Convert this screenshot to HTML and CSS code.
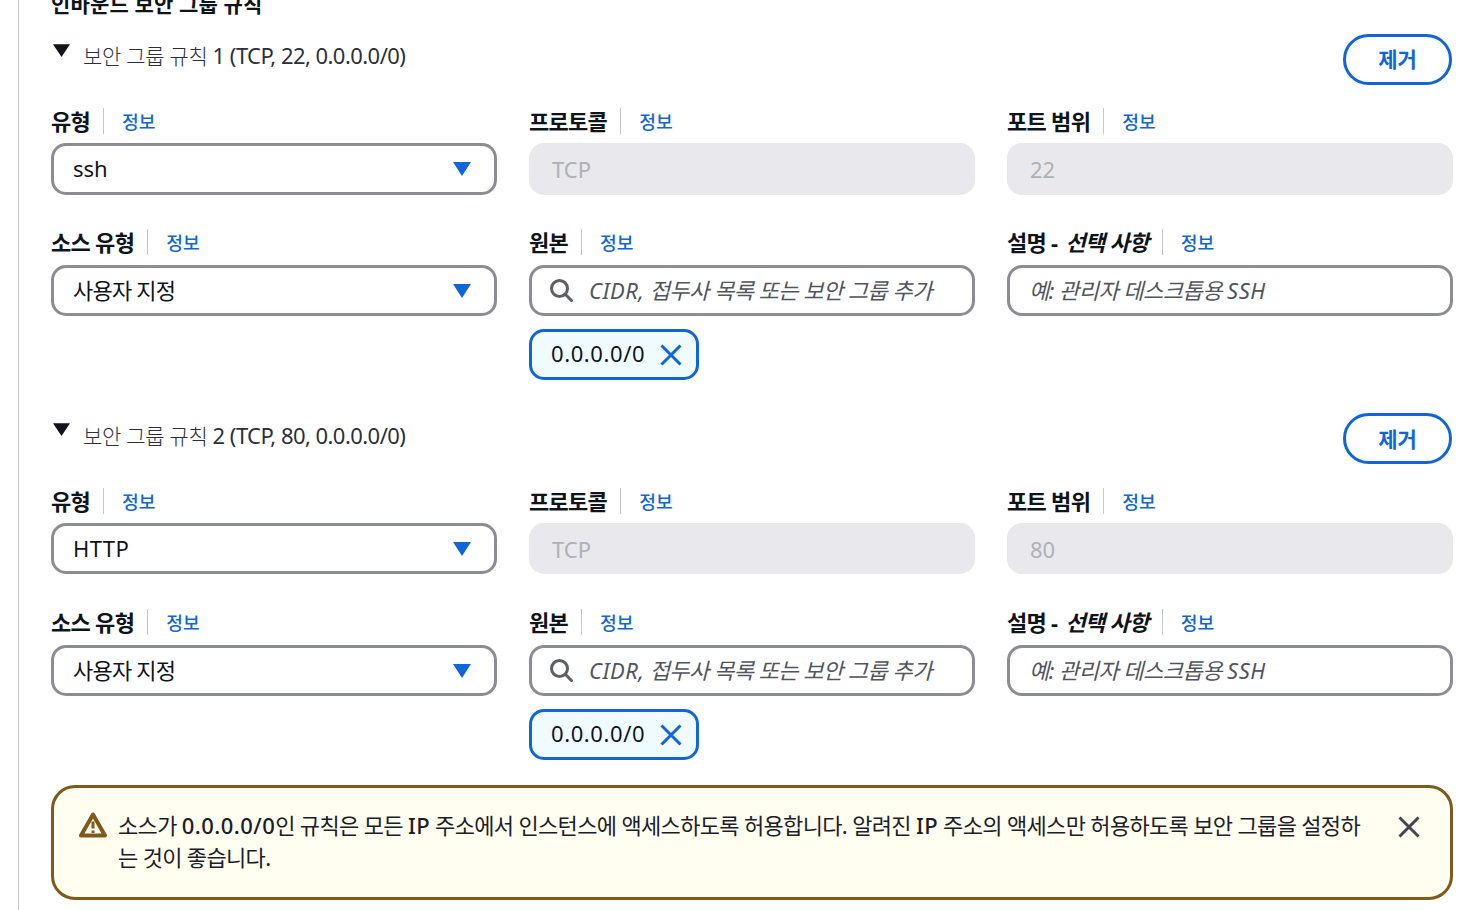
FILE: index.html
```html
<!DOCTYPE html>
<html lang="ko">
<head>
    <meta charset="UTF-8">
    <meta name="viewport" content="width=device-width, initial-scale=1.0">
    <title>인바운드 보안 그룹 규칙</title>
    <link rel="stylesheet" href="styles.css">
</head>
<body>
    <div class="page">
        <h2 class="section-title">인바운드 보안 그룹 규칙</h2>

        <div class="rule">
            <div class="rule-head">
                <div class="rule-title">
                    <svg class="caret" viewBox="0 0 16 12"><path d="M0 0h16L8 12z"/></svg>
                    <span class="rule-name"><span class="light">보안 그룹 규칙</span> 1 (TCP, 22, 0.0.0.0/0)</span>
                </div>
                <button class="remove-btn">제거</button>
            </div>
            <div class="field-grid">
                <div class="field">
                    <div class="field-label"><span class="label-text">유형</span><a class="info">정보</a></div>
                    <div class="select"><span>ssh</span><svg class="select-caret" viewBox="0 0 18 14"><path d="M0 0h18L9 14z"/></svg></div>
                </div>
                <div class="field">
                    <div class="field-label"><span class="label-text">프로토콜</span><a class="info">정보</a></div>
                    <div class="input-disabled">TCP</div>
                </div>
                <div class="field">
                    <div class="field-label"><span class="label-text">포트 범위</span><a class="info">정보</a></div>
                    <div class="input-disabled">22</div>
                </div>
                <div class="field">
                    <div class="field-label"><span class="label-text">소스 유형</span><a class="info">정보</a></div>
                    <div class="select"><span class="select-ko">사용자 지정</span><svg class="select-caret" viewBox="0 0 18 14"><path d="M0 0h18L9 14z"/></svg></div>
                </div>
                <div class="field">
                    <div class="field-label"><span class="label-text">원본</span><a class="info">정보</a></div>
                    <div class="input search">
                        <svg class="search-icon" viewBox="0 0 24 24"><circle cx="10.5" cy="10.5" r="8"/><path d="M16.5 16.5l7 7"/></svg>
                        <span class="placeholder"><span class="ph-latin">CIDR,</span> 접두사 목록 또는 보안 그룹 추가</span>
                    </div>
                    <div class="token"><span>0.0.0.0/0</span><svg class="token-x" viewBox="0 0 22 22"><path d="M1.5 1.5l19 19M20.5 1.5l-19 19"/></svg></div>
                </div>
                <div class="field">
                    <div class="field-label"><span class="label-text">설명 - <em>선택 사항</em></span><a class="info">정보</a></div>
                    <div class="input"><span class="placeholder">예: 관리자 데스크톱용 <span class="ph-latin">SSH</span></span></div>
                </div>
            </div>
        </div>

        <div class="rule">
            <div class="rule-head">
                <div class="rule-title">
                    <svg class="caret" viewBox="0 0 16 12"><path d="M0 0h16L8 12z"/></svg>
                    <span class="rule-name"><span class="light">보안 그룹 규칙</span> 2 (TCP, 80, 0.0.0.0/0)</span>
                </div>
                <button class="remove-btn">제거</button>
            </div>
            <div class="field-grid">
                <div class="field">
                    <div class="field-label"><span class="label-text">유형</span><a class="info">정보</a></div>
                    <div class="select"><span class="select-latin">HTTP</span><svg class="select-caret" viewBox="0 0 18 14"><path d="M0 0h18L9 14z"/></svg></div>
                </div>
                <div class="field">
                    <div class="field-label"><span class="label-text">프로토콜</span><a class="info">정보</a></div>
                    <div class="input-disabled">TCP</div>
                </div>
                <div class="field">
                    <div class="field-label"><span class="label-text">포트 범위</span><a class="info">정보</a></div>
                    <div class="input-disabled">80</div>
                </div>
                <div class="field">
                    <div class="field-label"><span class="label-text">소스 유형</span><a class="info">정보</a></div>
                    <div class="select"><span class="select-ko">사용자 지정</span><svg class="select-caret" viewBox="0 0 18 14"><path d="M0 0h18L9 14z"/></svg></div>
                </div>
                <div class="field">
                    <div class="field-label"><span class="label-text">원본</span><a class="info">정보</a></div>
                    <div class="input search">
                        <svg class="search-icon" viewBox="0 0 24 24"><circle cx="10.5" cy="10.5" r="8"/><path d="M16.5 16.5l7 7"/></svg>
                        <span class="placeholder"><span class="ph-latin">CIDR,</span> 접두사 목록 또는 보안 그룹 추가</span>
                    </div>
                    <div class="token"><span>0.0.0.0/0</span><svg class="token-x" viewBox="0 0 22 22"><path d="M1.5 1.5l19 19M20.5 1.5l-19 19"/></svg></div>
                </div>
                <div class="field">
                    <div class="field-label"><span class="label-text">설명 - <em>선택 사항</em></span><a class="info">정보</a></div>
                    <div class="input"><span class="placeholder">예: 관리자 데스크톱용 <span class="ph-latin">SSH</span></span></div>
                </div>
            </div>
        </div>

        <div class="alert">
            <svg class="alert-icon" viewBox="0 0 28 26"><path class="tri" d="M14 2.5L2 23.5h24z"/><path class="mark" d="M14 9.5v7M14 18.5v2.5"/></svg>
            <p class="alert-text">소스가 <span class="num">0.0.0.0/0</span>인 규칙은 모든 <span class="num">IP</span> 주소에서 인스턴스에 액세스하도록 허용합니다. 알려진 <span class="num">IP</span> 주소의 액세스만 허용하도록 보안 그룹을 설정하<br>는 것이 좋습니다.</p>
            <svg class="alert-x" viewBox="0 0 22 22"><path d="M1.5 1.5l19 19M20.5 1.5l-19 19"/></svg>
        </div>
    </div>
</body>
</html>
```

FILE: styles.css
```css
html, body {
    height: 100%;
    overflow: hidden;
}
body {
    margin: 0;
    background: white;
    color: #0f141a;
    font-family: "Noto Sans", "Noto Sans CJK KR", sans-serif;
    font-size: 22px;
}
.page {
    display: flow-root;
    height: 910px;
    box-sizing: border-box;
    margin-left: 18px;
    padding: 0 29px 0 32px;
    border-left: 1px solid #c6c6cd;
}
.section-title {
    margin: -13px 0 0;
    height: 33px;
    line-height: 34px;
    font-size: 21px;
    font-weight: 700;
    letter-spacing: 0.15px;
}
.rule {
    height: 380px;
}
.rule-head {
    display: flex;
    justify-content: space-between;
    height: 79px;
    padding-top: 14px;
    box-sizing: border-box;
}
.rule-title {
    display: flex;
    align-items: flex-start;
    gap: 13px;
    padding: 0 0 0 2px;
}
.caret {
    width: 17px;
    height: 13px;
    margin-top: 10px;
    fill: #0f141a;
}
.rule + .rule .caret {
    margin-top: 9px;
}
.rule-name {
    margin-top: -1px;
    font-size: 22px;
    line-height: 44px;
    letter-spacing: -0.55px;
    color: #2b3038;
}
.light {
    font-size: 21px;
    font-weight: 300;
    letter-spacing: -0.3px;
}
.remove-btn {
    width: 109px;
    height: 51px;
    margin-right: 1px;
    padding: 0 0 4px;
    background: white;
    border: 3px solid #1066d8;
    border-radius: 26px;
    color: #1066d8;
    font-family: inherit;
    font-size: 21px;
    font-weight: 700;
}
.rule + .rule .remove-btn {
    margin-top: -1px;
    padding-bottom: 1px;
}
.field-grid {
    display: grid;
    grid-template-columns: repeat(3, 446px);
    column-gap: 32px;
    align-items: start;
}
.field-label {
    display: flex;
    align-items: center;
    height: 44px;
}
.field:nth-child(n+4) .field-label {
    box-sizing: border-box;
    height: 45px;
    margin-top: -1px;
    padding-bottom: 2px;
}
.label-text {
    padding-right: 13px;
    font-size: 22px;
    font-weight: 700;
    letter-spacing: -0.7px;
    line-height: 26px;
    border-right: 1px solid #c6c6cd;
}
.label-text em {
    margin-left: 3px;
}
.info {
    margin-left: 18px;
    font-size: 18.2px;
    font-weight: 500;
    color: #1066d8;
}
.select, .input, .input-disabled {
    display: flex;
    align-items: center;
    box-sizing: border-box;
    height: 51px;
    border-radius: 15px;
    font-size: 22px;
}
.rule:first-of-type .field:nth-child(-n+3) .select,
.rule:first-of-type .field:nth-child(-n+3) .input-disabled {
    height: 52px;
}
.select, .input {
    padding-bottom: 2px;
    border: 3px solid #8c8c94;
    background: white;
}
.field:nth-child(n+4) .select, .field:nth-child(n+4) .input {
    padding-bottom: 4px;
}
.select {
    justify-content: space-between;
    padding-right: 23px;
    padding-left: 19px;
}
.select-ko {
    letter-spacing: -0.8px;
}
.select-latin {
    letter-spacing: 0.4px;
}
.select-caret {
    width: 18px;
    height: 14px;
    margin-top: 2px;
    fill: #1066d8;
}
.field:nth-child(n+4) .select-caret {
    margin-top: 4px;
}
.input {
    padding-right: 19px;
    padding-left: 19px;
}
.input.search {
    padding-left: 17px;
}
.input-disabled {
    padding: 0 23px;
    background: #e8e8ed;
    color: #b0b0b7;
}
.search-icon {
    flex: none;
    width: 24px;
    height: 24px;
    margin: 3px 16px 0 0;
    fill: none;
    stroke: #5a5f68;
    stroke-width: 3;
}
.placeholder {
    font-style: italic;
    color: #50555e;
    letter-spacing: -0.53px;
}
.ph-latin {
    letter-spacing: 0.5px;
}
.token {
    display: inline-flex;
    align-items: center;
    gap: 15px;
    box-sizing: border-box;
    width: 170px;
    height: 51px;
    margin-top: 13px;
    padding: 0 13px 4px 19px;
    border: 3px solid #1066d8;
    border-radius: 15px;
    background: #f0fbff;
    letter-spacing: 0.6px;
}
.token-x {
    width: 22px;
    height: 22px;
    margin-top: 4px;
    fill: none;
    stroke: #1066d8;
    stroke-width: 3;
}
.field-grid .field:nth-child(n+4) {
    margin-top: 26px;
}
.rule + .rule .field:nth-child(n+4) {
    margin-top: 27px;
}
.alert {
    display: flex;
    align-items: flex-start;
    box-sizing: border-box;
    width: 1402px;
    height: 115px;
    margin-top: 5px;
    padding: 24px 30px 0 25px;
    border: 3px solid #7f5a1c;
    border-radius: 24px;
    background: #fffef0;
}
.alert-icon {
    flex: none;
    width: 28px;
    height: 26px;
    margin-right: 11px;
}
.alert-icon .tri {
    fill: none;
    stroke: #7f5a1c;
    stroke-width: 4;
    stroke-linejoin: round;
}
.alert-icon .mark {
    fill: none;
    stroke: #7f5a1c;
    stroke-width: 3;
}
.alert-text {
    flex: 1;
    margin: -3px 0 0;
    line-height: 32px;
    letter-spacing: -0.66px;
    color: #1b2028;
}
.num {
    letter-spacing: 0.45px;
    font-weight: 500;
}
.alert-x {
    flex: none;
    width: 22px;
    height: 22px;
    margin: 4px 0 0 30px;
    fill: none;
    stroke: #424650;
    stroke-width: 3;
}
```
